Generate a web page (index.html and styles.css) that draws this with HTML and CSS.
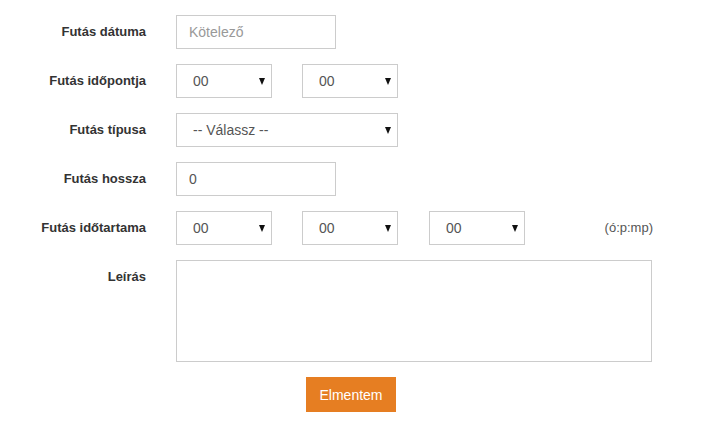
FILE: index.html
```html
<!DOCTYPE html>
<html>
  <head>
    <meta charset="utf-8" />
    <meta name="viewport" content="width=device-width, initial-scale=1.0" />
    <title>Futás rögzítése</title>
    <link rel="stylesheet" href="styles.css">
  </head>
  <body>
    <form class="run-form">
      <div class="form-row">
        <label class="form-label" for="run-date">Futás dátuma</label>
        <div class="form-field">
          <input id="run-date" class="form-input input-short" type="text" placeholder="Kötelező" />
        </div>
      </div>

      <div class="form-row">
        <label class="form-label">Futás időpontja</label>
        <div class="form-field">
          <span class="select-wrap select-small">
            <select class="form-select"><option>00</option></select>
          </span>
          <span class="select-wrap select-small">
            <select class="form-select"><option>00</option></select>
          </span>
        </div>
      </div>

      <div class="form-row">
        <label class="form-label">Futás típusa</label>
        <div class="form-field">
          <span class="select-wrap select-wide">
            <select class="form-select"><option>-- Válassz --</option></select>
          </span>
        </div>
      </div>

      <div class="form-row">
        <label class="form-label" for="run-length">Futás hossza</label>
        <div class="form-field">
          <input id="run-length" class="form-input input-short" type="text" value="0" />
        </div>
      </div>

      <div class="form-row">
        <label class="form-label">Futás időtartama</label>
        <div class="form-field">
          <span class="select-wrap select-small">
            <select class="form-select"><option>00</option></select>
          </span>
          <span class="select-wrap select-small">
            <select class="form-select"><option>00</option></select>
          </span>
          <span class="select-wrap select-small">
            <select class="form-select"><option>00</option></select>
          </span>
          <span class="field-hint">(ó:p:mp)</span>
        </div>
      </div>

      <div class="form-row">
        <label class="form-label" for="run-desc">Leírás</label>
        <div class="form-field field-tall">
          <textarea id="run-desc" class="form-textarea"></textarea>
        </div>
      </div>

      <div class="form-actions">
        <button type="submit" class="btn-save">Elmentem</button>
      </div>
    </form>
  </body>
</html>
```

FILE: styles.css
```css
body {
  margin: 0;
  background: #fff;
  font-family: "Liberation Sans", Arial, sans-serif;
  font-size: 14px;
  line-height: 20px;
  color: #333;
}
.run-form {
  padding-top: 15px;
  width: 652px;
}
.form-row {
  display: flex;
  align-items: flex-start;
  margin-bottom: 15px;
}
.form-label {
  width: 146px;
  flex: none;
  padding-top: 7px;
  text-align: right;
  font-size: 13px;
  font-weight: bold;
  color: #333;
}
.form-field {
  flex: 1;
  display: flex;
  align-items: center;
  margin-left: 30px;
  height: 34px;
}
.field-tall {
  height: auto;
}
.form-input,
.form-select,
.form-textarea {
  box-sizing: border-box;
  font-family: inherit;
  font-size: 14px;
  color: #555;
  background: #fff;
  border: 1px solid #ccc;
  border-radius: 0;
  outline: none;
}
.form-input {
  height: 34px;
  padding: 6px 12px;
}
.form-input::placeholder {
  color: #999;
}
.input-short {
  width: 160px;
}
.select-wrap {
  position: relative;
  display: inline-block;
  height: 34px;
}
.select-wrap::after {
  content: "";
  position: absolute;
  right: 7px;
  top: 14px;
  border-left: 3.5px solid transparent;
  border-right: 3.5px solid transparent;
  border-top: 7px solid #111;
  pointer-events: none;
}
.form-select {
  appearance: none;
  -webkit-appearance: none;
  width: 100%;
  height: 34px;
  padding: 6px 20px 6px 16px;
}
.select-small {
  width: 96px;
  margin-right: 30px;
}
.select-small + .select-small + .select-small {
  margin-left: 1px;
}
.select-wide {
  width: 222px;
}
.field-hint {
  flex: 1;
  text-align: right;
  font-size: 13px;
  color: #555;
  margin-right: -1px;
}
.form-textarea {
  display: block;
  width: 476px;
  height: 102px;
  padding: 6px 12px;
  resize: none;
}
.form-actions {
  padding-left: 306px;
}
.btn-save {
  width: 90px;
  height: 35px;
  border: none;
  background: #e67e22;
  color: #fff;
  font-family: inherit;
  font-size: 14px;
  cursor: pointer;
}
```
